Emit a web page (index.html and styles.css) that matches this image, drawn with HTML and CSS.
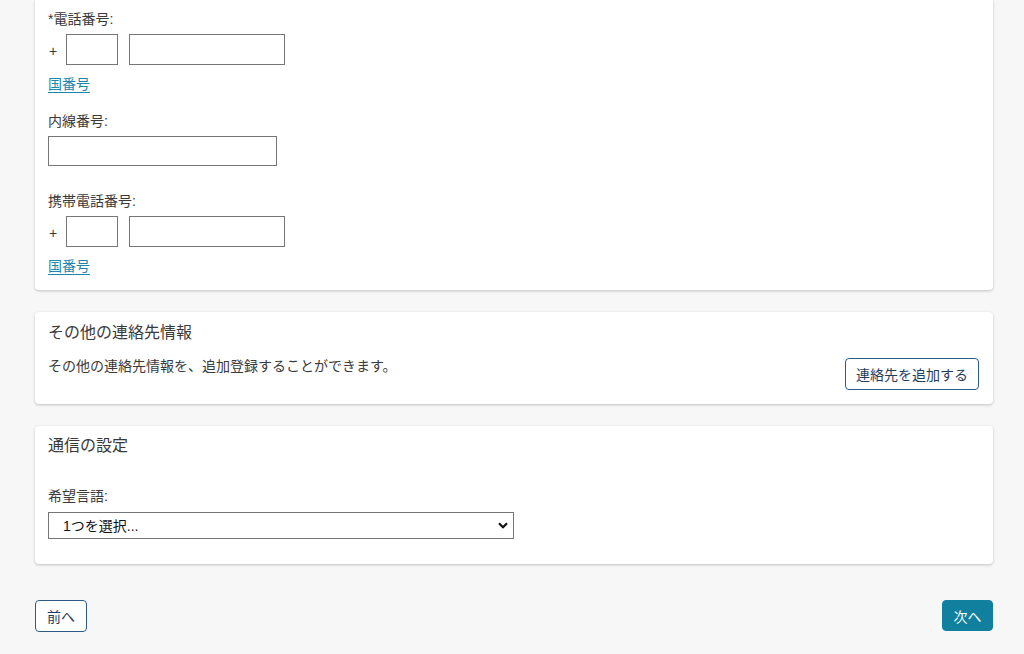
FILE: index.html
```html
<!DOCTYPE html>
<html lang="ja">
<head>
    <meta charset="UTF-8">
    <title>連絡先情報</title>
    <link rel="stylesheet" href="styles.css">
</head>
<body>
<div class="page">
    <!-- 電話番号 -->
    <div class="card card-first">
        <div class="field field-phone">
            <label class="label">*電話番号:</label>
            <div class="phone-row">
                <span class="plus">+</span>
                <input class="input input-cc" type="text">
                <input class="input input-num" type="text">
            </div>
            <a class="link" href="#">国番号</a>
        </div>
        <div class="field field-ext">
            <label class="label">内線番号:</label>
            <input class="input input-ext" type="text">
        </div>
        <div class="field">
            <label class="label">携帯電話番号:</label>
            <div class="phone-row">
                <span class="plus">+</span>
                <input class="input input-cc" type="text">
                <input class="input input-num" type="text">
            </div>
            <a class="link" href="#">国番号</a>
        </div>
    </div>

    <!-- その他の連絡先 -->
    <div class="card card-other">
        <h2 class="card-title">その他の連絡先情報</h2>
        <div class="other-row">
            <p class="text">その他の連絡先情報を、追加登録することができます。</p>
            <button class="btn btn-outline btn-add">連絡先を追加する</button>
        </div>
    </div>

    <!-- 通信の設定 -->
    <div class="card card-comm">
        <h2 class="card-title">通信の設定</h2>
        <label class="label label-lang">希望言語:</label>
        <div class="select-wrap">
            <select class="select">
                <option>1つを選択...</option>
            </select>
            <svg class="select-arrow" width="10" height="7" viewBox="0 0 10 7">
                <path d="M1 1.2 L5 5.2 L9 1.2" fill="none" stroke="#111" stroke-width="2.2"/>
            </svg>
        </div>
    </div>

    <div class="nav">
        <button class="btn btn-outline btn-prev">前へ</button>
        <button class="btn btn-primary">次へ</button>
    </div>
</div>
</body>
</html>
```

FILE: styles.css
```css
html, body {
    margin: 0;
    padding: 0;
    background: #f7f7f7;
}

body {
    font-family: "Liberation Sans", "Noto Sans CJK JP", sans-serif;
    font-size: 14px;
    color: #3a3a3a;
}

.page {
    width: 958px;
    margin-left: 35px;
}

.card {
    background: #ffffff;
    border-radius: 4px;
    box-shadow: 0 1px 3px rgba(0, 0, 0, 0.22);
    padding: 0 14px 14px 13px;
    margin-bottom: 22px;
}

.card-first {
    padding-top: 9px;
    border-radius: 0 0 4px 4px;
}

.field {
    display: flex;
    flex-direction: column;
    align-items: flex-start;
}

.field-phone {
    margin-bottom: 17px;
}

.field-ext {
    margin-bottom: 25px;
}

.label {
    display: block;
    line-height: 20px;
    margin-bottom: 5px;
}

.phone-row {
    display: flex;
    align-items: center;
}

.plus {
    width: 17px;
    padding-left: 1px;
    line-height: 20px;
    padding-top: 2px;
}

.input {
    box-sizing: border-box;
    border: 1px solid #767676;
    border-radius: 0;
    background: #fff;
    height: 31px;
    margin: 0;
    padding: 2px 6px;
}

.input-cc {
    width: 52px;
    margin-right: 11px;
}

.input-num {
    width: 156px;
}

.input-ext {
    width: 229px;
    height: 30px;
}

.link {
    margin-top: 9px;
    line-height: 20px;
    color: #1b87ab;
    text-decoration: underline;
    text-underline-offset: 3px;
}

.card-title {
    margin: 0;
    font-size: 16px;
    font-weight: normal;
    line-height: 24px;
}

.card-other {
    padding-top: 9px;
}

.card-other .card-title {
    margin-bottom: 11px;
}

.other-row {
    display: flex;
    justify-content: space-between;
    align-items: flex-start;
}

.text {
    margin: 0;
    line-height: 20px;
}

.btn {
    font-family: "Liberation Sans", "Noto Sans CJK JP", sans-serif;
    font-size: 14px;
    border-radius: 4px;
    box-sizing: border-box;
    height: 32px;
    cursor: pointer;
}

.btn-outline {
    background: #ffffff;
    border: 1px solid #2d5b87;
    color: #1f3d5c;
}

.btn-add {
    margin-top: 2px;
    width: 134px;
    padding: 0;
}

.card-comm {
    padding-top: 8px;
    padding-bottom: 25px;
}

.label-lang {
    margin-top: 28px;
    margin-bottom: 6px;
}

.select-wrap {
    position: relative;
    width: 466px;
}

.select {
    appearance: none;
    -webkit-appearance: none;
    box-sizing: border-box;
    width: 466px;
    height: 27px;
    border: 1px solid #767676;
    border-radius: 0;
    background: #ffffff;
    font-family: "Liberation Sans", "Noto Sans CJK JP", sans-serif;
    font-size: 14px;
    color: #111;
    padding: 0 0 0 14px;
    margin: 0;
    display: block;
}

.select-arrow {
    position: absolute;
    right: 6px;
    top: 10px;
    pointer-events: none;
}

.nav {
    display: flex;
    justify-content: space-between;
    margin-top: 36px;
}

.btn-prev {
    width: 52px;
    padding: 0;
}

.btn-primary {
    width: 51px;
    height: 31px;
    padding: 0;
    background: #11809f;
    border: 1px solid #11809f;
    color: #ffffff;
}
```
